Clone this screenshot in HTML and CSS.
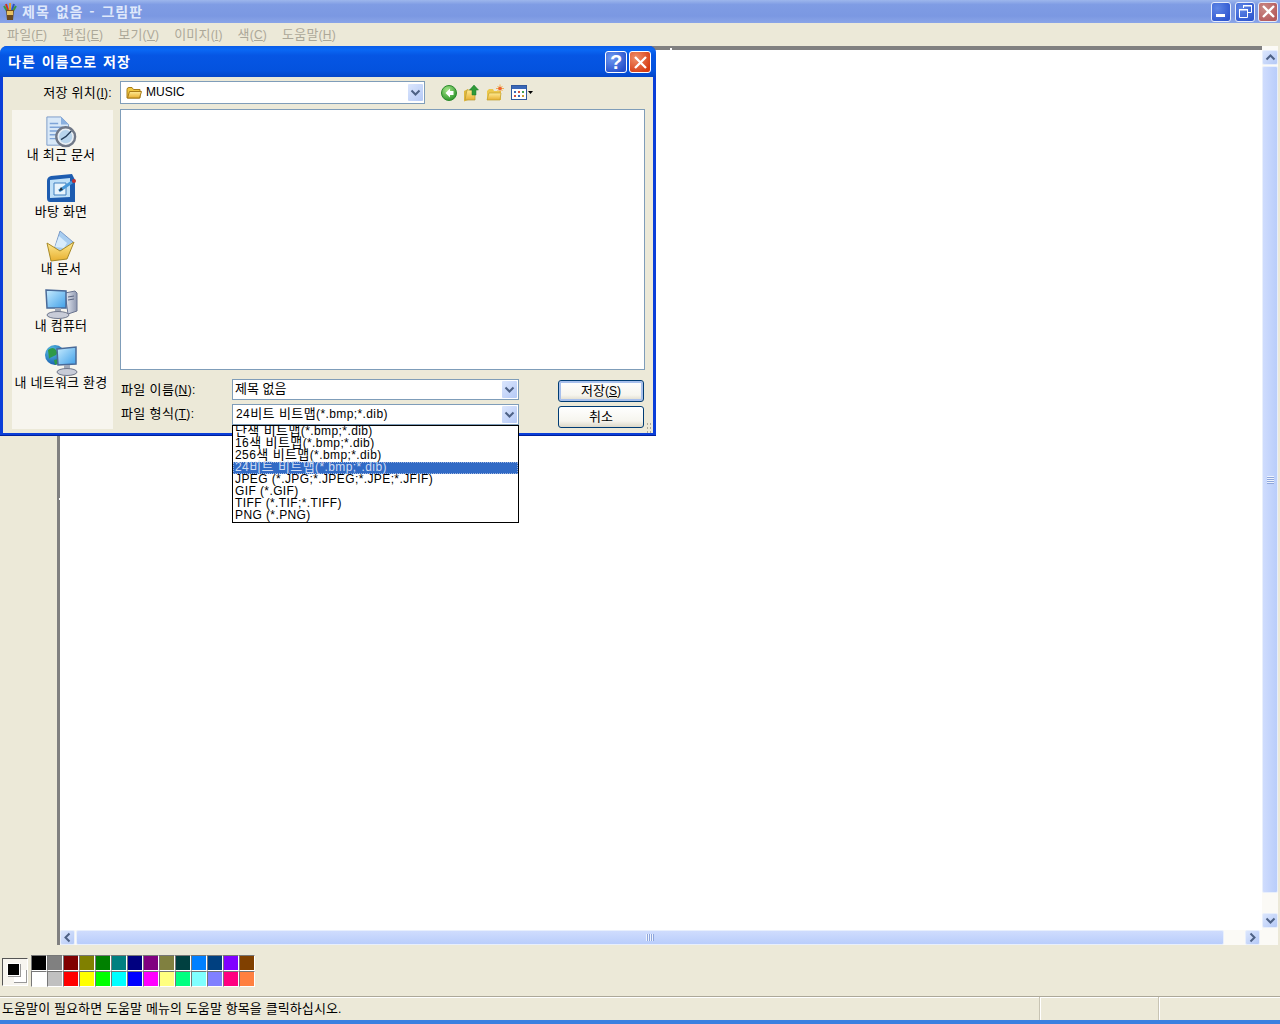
FILE: index.html
```html
<!DOCTYPE html>
<html lang="ko">
<head>
<meta charset="utf-8">
<title>제목 없음 - 그림판</title>
<link rel="stylesheet" href="styles.css">
</head>
<body>
<svg class="defs" width="0" height="0" aria-hidden="true">
  <defs>
    <linearGradient id="gFolder" x1="0" y1="0" x2="0" y2="1"><stop offset="0" stop-color="#ffeb94"/><stop offset="1" stop-color="#e8b030"/></linearGradient>
    <linearGradient id="gScreen" x1="0" y1="0" x2="1" y2="1"><stop offset="0" stop-color="#c8ecff"/><stop offset="1" stop-color="#3f9fe8"/></linearGradient>
    <linearGradient id="gCase" x1="0" y1="0" x2="1" y2="0"><stop offset="0" stop-color="#e8ecf4"/><stop offset="1" stop-color="#8f98b0"/></linearGradient>
    <radialGradient id="gGreen" cx=".4" cy=".3" r=".8"><stop offset="0" stop-color="#a6e68a"/><stop offset="1" stop-color="#1f8c1f"/></radialGradient>
    <radialGradient id="gGlobe" cx=".35" cy=".3" r=".8"><stop offset="0" stop-color="#5cc4e8"/><stop offset="1" stop-color="#1050a8"/></radialGradient>
  </defs>
</svg>
<div class="window">
  <header class="titlebar">
    <svg class="app-icon" width="16" height="18" viewBox="0 0 16 18"><path d="M4 1l2 6" stroke="#d03020" stroke-width="2"/><path d="M8 0v7" stroke="#e0a030" stroke-width="2"/><path d="M12 1l-2 6" stroke="#3050c0" stroke-width="2"/><path d="M2 3l3 5M14 3l-3 5" stroke="#3a9a40" stroke-width="2"/><path d="M4 7h8l-1 10H5z" fill="#6a4a20"/><path d="M5 8h6v4H5z" fill="#e8c060"/></svg>
    <div class="app-title"><span class="kt">제목 없음 - 그림판</span></div>
    <div class="caption-buttons">
      <div class="capbtn blue"><svg width="21" height="21" viewBox="0 0 21 21"><rect x="5" y="13" width="9" height="3" fill="#fff"/></svg></div>
      <div class="capbtn blue"><svg width="21" height="21" viewBox="0 0 21 21"><path d="M8.500 7V4.500h8v7H13M4.500 8.500h8v8h-8z" fill="none" stroke="#fff"/><path d="M4 8h9v1.500H4zM8 4h9v1.500H8z" fill="#fff"/></svg></div>
      <div class="capbtn red"><svg width="21" height="21" viewBox="0 0 21 21"><path d="M5 5l11 11M16 5L5 16" stroke="#fff" stroke-width="2.300"/></svg></div>
    </div>
  </header>
  <nav class="menubar">
    <span class="menu"><span class="k">파일</span>(<u>F</u>)</span>
    <span class="menu"><span class="k">편집</span>(<u>E</u>)</span>
    <span class="menu"><span class="k">보기</span>(<u>V</u>)</span>
    <span class="menu"><span class="k">이미지</span>(<u>I</u>)</span>
    <span class="menu"><span class="k">색</span>(<u>C</u>)</span>
    <span class="menu"><span class="k">도움말</span>(<u>H</u>)</span>
  </nav>
  <main class="workspace">
    <aside class="toolbox"></aside>
    <section class="view">
      <div class="canvas-row">
        <div class="canvas-wrap"><div class="canvas"></div></div>
        <div class="vscroll">
          <div class="sbtn"><svg width="15" height="15" viewBox="0 0 15 15"><path d="M3.500 9.500l4-4 4 4" fill="none" stroke="#4d6185" stroke-width="2"/></svg></div>
          <div class="vthumb"><span class="vgrip"></span></div>
          <div class="sbtn"><svg width="15" height="15" viewBox="0 0 15 15"><path d="M3.500 5.500l4 4 4-4" fill="none" stroke="#4d6185" stroke-width="2"/></svg></div>
        </div>
      </div>
      <div class="hscroll">
        <div class="sbtn"><svg width="15" height="15" viewBox="0 0 15 15"><path d="M9.500 3.500l-4 4 4 4" fill="none" stroke="#4d6185" stroke-width="2"/></svg></div>
        <div class="hthumb"><span class="hgrip"></span></div>
        <div class="sbtn"><svg width="15" height="15" viewBox="0 0 15 15"><path d="M5.500 3.500l4 4-4 4" fill="none" stroke="#4d6185" stroke-width="2"/></svg></div>
      </div>
    </section>
  </main>
  <section class="palette">
    <div class="current"><span class="bgcolor"></span><span class="fgcolor"></span></div>
    <div class="swatches">
      <i class="c1"></i><i class="c2"></i><i class="c3"></i><i class="c4"></i><i class="c5"></i><i class="c6"></i><i class="c7"></i><i class="c8"></i><i class="c9"></i><i class="c10"></i><i class="c11"></i><i class="c12"></i><i class="c13"></i><i class="c14"></i>
      <i class="c15"></i><i class="c16"></i><i class="c17"></i><i class="c18"></i><i class="c19"></i><i class="c20"></i><i class="c21"></i><i class="c22"></i><i class="c23"></i><i class="c24"></i><i class="c25"></i><i class="c26"></i><i class="c27"></i><i class="c28"></i>
    </div>
  </section>
  <footer class="statusbar">
    <div class="status-main"><span class="k">도움말이 필요하면 도움말 메뉴의 도움말 항목을 클릭하십시오</span>.</div>
    <div class="status-a"></div>
    <div class="status-b"></div>
  </footer>
  <div class="bottom-edge"></div>

  <span class="handle handle-top"></span>
  <span class="handle handle-left"></span>

  <section class="dialog">
    <header class="dlg-title">
      <div class="dlg-name"><span class="kt">다른 이름으로 저장</span></div>
      <div class="capbtn blue big q">?</div>
      <div class="capbtn red big"><svg width="21" height="21" viewBox="0 0 21 21"><path d="M5 5l11 11M16 5L5 16" stroke="#fff" stroke-width="2.300"/></svg></div>
    </header>
    <div class="dlg-body">
      <div class="look-row">
        <div class="look-label"><span class="k">저장 위치</span>(<u>I</u>):</div>
        <div class="combo look-combo">
          <svg class="folder16" width="16" height="14" viewBox="0 0 16 14"><path d="M1 3.500Q1 1.500 3 1.500h3l1.500 2H14v8.500H1z" fill="#f0c840" stroke="#a87c18"/><path d="M1.500 12l2-6.500h12L13.500 12z" fill="url(#gFolder)" stroke="#a87c18"/></svg>
          <span class="combo-text">MUSIC</span>
          <span class="dd"><svg width="15" height="17" viewBox="0 0 15 17"><path d="M3.500 6.500l4 4 4-4" fill="none" stroke="#4d6185" stroke-width="2"/></svg></span>
        </div>
        <div class="tools">
          <svg width="18" height="18" viewBox="0 0 18 18"><circle cx="9" cy="9" r="7.500" fill="url(#gGreen)" stroke="#2c8a2c"/><path d="M10 4.500L5.500 9l4.500 4.500V11h3.500V7H10z" fill="#fff"/></svg>
          <svg width="18" height="18" viewBox="0 0 18 18"><path d="M1 7l4-2v11l-4 1.500z" fill="#e0b83c"/><path d="M4 6h8v10H2z" fill="url(#gFolder)" stroke="#b89a30" stroke-width=".700"/><path d="M11 1L6.500 6H9v5h4V6h2.500z" fill="#2f9a38" stroke="#1d7a28" stroke-width=".500"/></svg>
          <svg width="18" height="18" viewBox="0 0 18 18"><path d="M1 7l2-2h4l1 2h7v9H1z" fill="#ecc84c"/><path d="M1 16l2-7h12l-1 7z" fill="url(#gFolder)" stroke="#c0a030" stroke-width=".700"/><path d="M14 .500v8M10 4.500h8M11.500 2l5 5M16.500 2l-5 5" stroke="#f0a030" stroke-width=".800"/><circle cx="14" cy="4.500" r="1.800" fill="#f06030"/></svg>
          <span class="views"><svg width="16" height="15" viewBox="0 0 16 15"><rect x=".500" y=".500" width="15" height="14" fill="#fff" stroke="#30589c"/><rect x="1" y="1" width="14" height="3" fill="#3a68b8"/><path d="M3 6h2v2H3z" fill="#3a68b8"/><path d="M7 6h2v2H7z" fill="#d05040"/><path d="M11 6h2v2h-2z" fill="#40a050"/><path d="M3 10h2v2H3z" fill="#d05040"/><path d="M7 10h2v2H7z" fill="#3a68b8"/><path d="M11 10h2v2h-2z" fill="#d0a030"/></svg><svg width="5" height="3" viewBox="0 0 5 3"><path d="M0 0h5L2.500 3z" fill="#000"/></svg></span>
        </div>
      </div>
      <div class="dlg-main">
        <aside class="places">
          <div class="place">
            <svg width="34" height="34" viewBox="0 0 34 34"><path d="M2 1h15l8 8v22H2z" fill="#d8e8f8" stroke="#7a9ac8"/><path d="M17 1v8h8z" fill="#8ab0e0"/><path d="M5 8h9M5 12h14M5 16h10M5 20h8M5 24h8" stroke="#7ea4d8" stroke-width="1.500"/><circle cx="22" cy="22" r="10" fill="#e8eef4" stroke="#707888" stroke-width="2.500"/><circle cx="22" cy="22" r="7" fill="#b8d4ec"/><path d="M22 22l6-6M22 22l-5 3" stroke="#28405c" stroke-width="1.500"/></svg>
            <span class="k">내 최근 문서</span>
          </div>
          <div class="place">
            <svg width="32" height="32" viewBox="0 0 32 32"><path d="M6 3L27 1l3 6v22H5Q2 29 2 25V8Q2 4 6 3z" fill="#1d5cb0"/><path d="M5 7l20-2v19L5 25z" fill="#bfe0f8"/><path d="M9 10h12v12H9z" fill="#e8f4fc" stroke="#4080c0"/><path d="M14 18l13-9" stroke="#4898d8" stroke-width="3"/><path d="M14 18l2-4 2 3z" fill="#203040"/><circle cx="29" cy="8" r="2" fill="#c03030"/></svg>
            <span class="k">바탕 화면</span>
          </div>
          <div class="place">
            <svg width="32" height="32" viewBox="0 0 32 32"><path d="M15 1l13 11-6 11H8z" fill="#a8cdf0" stroke="#7a9ac8"/><path d="M14 6l8 7-3 5-9-1z" fill="#d8ecfc"/><path d="M2 13l13 8 14-9-7 17-16 2z" fill="url(#gFolder)" stroke="#a88a28"/></svg>
            <span class="k">내 문서</span>
          </div>
          <div class="place">
            <svg width="34" height="32" viewBox="0 0 34 32"><path d="M21 6l10-2 2 2v18l-9 3z" fill="url(#gCase)" stroke="#6a7490"/><path d="M24 10l6-1M24 13l6-1" stroke="#5a6480"/><path d="M2 3l20 1v17H3z" fill="url(#gScreen)" stroke="#4a6a98" stroke-width="1.500"/><path d="M11 21h6v4h-6z" fill="#a0a8b8"/><ellipse cx="14" cy="28" rx="11" ry="3.500" fill="#c8ccd8" stroke="#70788c"/></svg>
            <span class="k">내 컴퓨터</span>
          </div>
          <div class="place">
            <svg width="34" height="32" viewBox="0 0 34 32"><circle cx="11" cy="11" r="10" fill="url(#gGlobe)"/><path d="M4 6q5-4 8 0t-2 6-5 3zM10 16l4-1 1 4-4 2z" fill="#2f9a48"/><path d="M13 5l19-2v17l-18 1z" fill="url(#gScreen)" stroke="#4a6a98" stroke-width="1.500"/><path d="M20 21h6v4h-6z" fill="#a0a8b8"/><ellipse cx="23" cy="28" rx="10" ry="3.500" fill="#c8ccd8" stroke="#70788c"/></svg>
            <span class="k">내 네트워크 환경</span>
          </div>
        </aside>
        <div class="files">
          <div class="filelist"></div>
          <div class="form">
            <div class="flabel name"><span class="k">파일 이름</span>(<u>N</u>):</div>
            <div class="combo"><span class="combo-text"><span class="k">제목 없음</span></span><span class="dd"><svg width="15" height="17" viewBox="0 0 15 17"><path d="M3.500 6.500l4 4 4-4" fill="none" stroke="#4d6185" stroke-width="2"/></svg></span></div>
            <button class="btn default"><span class="k">저장</span>(<u>S</u>)</button>
            <div class="flabel"><span class="k">파일 형식</span>(<u>T</u>):</div>
            <div class="combo"><span class="combo-text wide">24<span class="k">비트 비트맵</span>(*.bmp;*.dib)</span><span class="dd"><svg width="15" height="17" viewBox="0 0 15 17"><path d="M3.500 6.500l4 4 4-4" fill="none" stroke="#4d6185" stroke-width="2"/></svg></span></div>
            <button class="btn second"><span class="k">취소</span></button>
          </div>
        </div>
      </div>
      <span class="grip"></span>
    </div>
  </section>

  <ul class="dropdown">
    <li><span class="k">단색 비트맵</span>(*.bmp;*.dib)</li>
    <li>16<span class="k">색 비트맵</span>(*.bmp;*.dib)</li>
    <li>256<span class="k">색 비트맵</span>(*.bmp;*.dib)</li>
    <li class="sel">24<span class="k">비트 비트맵</span>(*.bmp;*.dib)</li>
    <li>JPEG (*.JPG;*.JPEG;*.JPE;*.JFIF)</li>
    <li>GIF (*.GIF)</li>
    <li>TIFF (*.TIF;*.TIFF)</li>
    <li>PNG (*.PNG)</li>
  </ul>
</div>
</body>
</html>
```
FILE: styles.css
```css
* { box-sizing: border-box; }
html, body { margin: 0; padding: 0; }
body { font: 12px "Liberation Sans", "Noto Sans CJK KR", sans-serif; color: #000; background: #ece9d8; overflow: hidden; }
.defs { position: absolute; }
.k { font-size: 13px; font-family: "Noto Sans CJK KR", sans-serif; line-height: 0; }
.kt { font-size: 14px; font-family: "Noto Sans CJK KR", sans-serif; font-weight: 700; letter-spacing: 1px; word-spacing: 1px; }
u { text-decoration: underline; }

.window { position: relative; width: 1280px; height: 1024px; display: flex; flex-direction: column; background: #ece9d8; overflow: hidden; }

.titlebar { height: 23px; flex: none; display: flex; align-items: center; padding: 0 2px 0 2px; background: linear-gradient(180deg, #9db6ec 0, #7f9ce4 20%, #7b98e2 70%, #8aa5e8 100%); }
.app-icon { flex: none; margin-right: 4px; }
.app-title { flex: 1; color: #dfe8fb; line-height: 22px; }
.caption-buttons { display: flex; gap: 3px; }
.caption-buttons .capbtn:first-child { margin-right: 1px; }
.capbtn { width: 20px; height: 20px; border: 1px solid #e6ecfb; border-radius: 3px; display: flex; align-items: center; justify-content: center; overflow: hidden; }
.capbtn svg { flex: none; }
.capbtn.blue { background: radial-gradient(circle at 30% 30%, #5f86e6, #3058d0 80%); }
.capbtn.red { background: radial-gradient(circle at 30% 30%, #c98a86, #b55a5c 80%); }
.capbtn.big { width: 22px; height: 22px; border-color: #fff; }
.capbtn.big.blue { background: radial-gradient(circle at 30% 30%, #6f9af0, #2750cc 80%); }
.capbtn.big.red { background: radial-gradient(circle at 30% 30%, #f0916a, #d63c14 80%); margin-left: 1px; }
.q { color: #fff; font-size: 20px; font-weight: 700; line-height: 20px; }

.menubar { height: 23px; flex: none; display: flex; align-items: center; padding: 1px 0 0 7px; gap: 15px; color: #aca899; background: #ece9d8; line-height: 23px; letter-spacing: .2px; }
.menu { display: block; white-space: nowrap; }

.workspace { height: 899px; flex: none; display: flex; }
.toolbox { width: 57px; flex: none; background: #ece9d8; }
.view { flex: 1; min-width: 0; display: flex; flex-direction: column; background: #ece9d8; padding-right: 2px; }
.canvas-row { flex: 1; display: flex; min-height: 0; }
.canvas-wrap { flex: 1; background: #808080; padding: 4px 0 0 3px; }
.canvas { height: 100%; background: #fff; }
.vscroll { width: 16px; flex: none; display: flex; flex-direction: column; align-items: stretch; padding-top: 4px; background: #fbfaf6; }
.hscroll { height: 15px; flex: none; display: flex; padding-left: 3px; background: #fbfaf6; border-right: 18px solid #fbfaf6; box-shadow: inset 3px 0 0 #808080; }
.sbtn { width: 15px; height: 15px; flex: none; border: 1px solid #e8effc; border-radius: 2px; background: linear-gradient(135deg, #dbe6fd, #b5c9f6); display: flex; align-items: center; justify-content: center; }
.sbtn svg { flex: none; }
.vscroll .sbtn { width: 16px; }
.vthumb { height: 827px; margin: 1px 0 20px; border: 1px solid #e8effc; border-radius: 2px; background: linear-gradient(90deg, #cfdcfd, #b9cdfb); display: flex; align-items: center; justify-content: center; }
.vgrip { width: 7px; height: 8px; background: repeating-linear-gradient(180deg, #eef3fe 0 1px, #8ea6dc 1px 2px); }
.hthumb { width: 1148px; margin: 0 21px 0 1px; border: 1px solid #e8effc; border-radius: 2px; background: linear-gradient(180deg, #cfdcfd, #b9cdfb); display: flex; align-items: center; justify-content: center; }
.hgrip { width: 8px; height: 7px; background: repeating-linear-gradient(90deg, #eef3fe 0 1px, #8ea6dc 1px 2px); }

.palette { height: 51px; flex: none; display: flex; padding: 10px 0 0 2px; background: #ece9d8; }
.current { width: 26px; height: 28px; position: relative; margin-top: 3px; background: #f7f5ef; border-top: 1px solid #555; border-left: 1px solid #555; border-right: 1px solid #fff; border-bottom: 1px solid #fff; }
.fgcolor { position: absolute; left: 4px; top: 4px; width: 13px; height: 13px; background: #000; border: 1px solid #fff; box-shadow: 1px 1px 0 #999; }
.bgcolor { position: absolute; left: 11px; top: 11px; width: 13px; height: 13px; background: #fff; border-right: 1px solid #999; border-bottom: 1px solid #999; }
.swatches { display: grid; grid-template-columns: repeat(14, 16px); grid-auto-rows: 16px; margin-left: 3px; height: 32px; }
.swatches i { display: block; border-top: 1px solid #777; border-left: 1px solid #777; border-right: 1px solid #fff; border-bottom: 1px solid #fff; }
.c1 { background: #000000; } .c2 { background: #808080; } .c3 { background: #800000; } .c4 { background: #808000; } .c5 { background: #008000; } .c6 { background: #008080; } .c7 { background: #000080; } .c8 { background: #800080; } .c9 { background: #808040; } .c10 { background: #004040; } .c11 { background: #0080ff; } .c12 { background: #004080; } .c13 { background: #8000ff; } .c14 { background: #804000; }
.c15 { background: #ffffff; } .c16 { background: #c0c0c0; } .c17 { background: #ff0000; } .c18 { background: #ffff00; } .c19 { background: #00ff00; } .c20 { background: #00ffff; } .c21 { background: #0000ff; } .c22 { background: #ff00ff; } .c23 { background: #ffff80; } .c24 { background: #00ff80; } .c25 { background: #80ffff; } .c26 { background: #8080ff; } .c27 { background: #ff0080; } .c28 { background: #ff8040; }

.statusbar { height: 24px; flex: none; display: flex; background: #ece9d8; border-top: 1px solid #aca899; box-shadow: inset 0 1px 0 #fff; line-height: 24px; }
.status-main { width: 1041px; padding-left: 2px; border-right: 1px solid #fff; box-shadow: inset -1px 0 0 #c8c4b4; white-space: nowrap; letter-spacing: .1px; }
.status-a { width: 119px; border-right: 1px solid #fff; box-shadow: inset -1px 0 0 #c8c4b4; }
.status-b { flex: 1; }
.bottom-edge { height: 4px; flex: none; background: #3a80e0; }

.handle { position: absolute; width: 2px; height: 2px; background: #fff; }
.handle-top { left: 670px; top: 48px; }
.handle-left { left: 59px; top: 498px; }

.dialog { position: absolute; left: 0; top: 46px; width: 656px; height: 390px; display: flex; flex-direction: column; border-radius: 7px 7px 0 0; background: linear-gradient(0deg, #00209c 0 1px, #0a3ed8 1px); overflow: hidden; }
.dlg-title { height: 31px; flex: none; display: flex; align-items: center; padding: 1px 5px 0 8px; gap: 1px; background: linear-gradient(180deg, #0a5ce8 0, #0a68f4 12%, #0656e4 30%, #0452de 80%, #0446c8 100%); }
.dlg-name { flex: 1; color: #fff; line-height: 26px; }
.dlg-body { position: relative; flex: 1; margin: 0 3px 3px; background: #ece9d8; padding: 4px 8px 0 9px; }
.look-row { display: flex; align-items: center; height: 23px; }
.look-label { width: 100px; text-align: right; white-space: nowrap; letter-spacing: .3px; }
.look-combo { width: 305px; height: 23px; margin-left: 8px; flex: none; }
.combo { display: flex; align-items: center; border: 1px solid #7f9db9; background: #fff; padding: 1px; position: relative; }
.form .combo { height: 21px; width: 287px; }
.folder16 { flex: none; margin: 0 2px 0 4px; }
.combo-text { flex: 1; padding-left: 2px; white-space: nowrap; line-height: 17px; }
.form .combo-text { padding-left: 1px; }
.form .combo-text.wide { letter-spacing: .4px; padding-left: 2px; }
.dd { width: 15px; height: 17px; flex: none; background: linear-gradient(135deg, #dbe6fd, #b5c9f6); border-radius: 1px; display: flex; }
.tools { display: flex; align-items: center; gap: 5px; margin-left: 15px; }
.views { display: flex; align-items: center; gap: 1px; margin-left: 2px; }
.dlg-main { display: flex; margin-top: 5px; }
.places { width: 101px; height: 319px; margin-top: 1px; flex: none; background: #f7f5ee; padding: 6px 3px 0 0; display: flex; flex-direction: column; }
.place { height: 57px; flex: none; display: flex; flex-direction: column; align-items: center; white-space: nowrap; letter-spacing: .2px; }
.place svg { flex: none; height: 32px; }
.place .k { margin-top: -2px; line-height: 16px; }
.files { width: 525px; margin-left: 7px; flex: none; display: flex; flex-direction: column; }
.filelist { height: 261px; background: #fff; border: 1px solid #7f9db9; }
.form { display: grid; grid-template-columns: 112px 287px 86px; grid-template-rows: 25px 25px; margin-top: 9px; }
.flabel { padding-left: 1px; line-height: 20px; white-space: nowrap; letter-spacing: .35px; }
.flabel.name { padding-top: 1px; }
.btn { font: inherit; width: 86px; height: 22px; margin-left: 39px; padding: 0; border: 1px solid #003c74; border-radius: 3px; background: linear-gradient(180deg, #fff 0, #f6f5ee 70%, #dcd8c8 100%); line-height: 18px; color: #000; }
.btn.default { margin-top: 1px; box-shadow: inset 0 0 0 2px #a8c0ec; }
.btn.second { margin-top: 2px; }
.grip { position: absolute; right: 1px; bottom: 0; width: 6px; height: 11px; background: radial-gradient(circle, #aca899 0 1px, transparent 1px) 0 0 / 3px 4px; }

.dropdown { position: absolute; left: 232px; top: 425px; width: 287px; height: 98px; margin: 0; padding: 0; list-style: none; background: #fff; border: 1px solid #000; overflow: hidden; letter-spacing: .4px; }
.dropdown li { height: 12px; line-height: 11px; padding-left: 2px; white-space: nowrap; }
.dropdown .sel { background: #316ac5; color: #cfdcf4; outline: 1px dotted #9db4de; outline-offset: -1px; }
```
